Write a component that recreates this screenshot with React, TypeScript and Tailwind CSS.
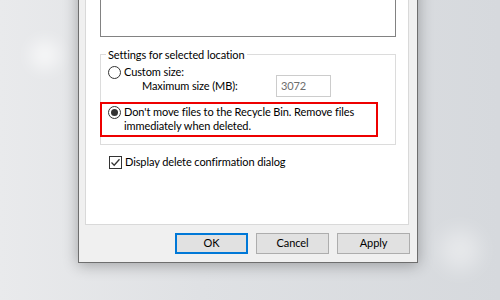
const font = { fontFamily: 'Lato, "Noto Sans", sans-serif' };

const Radio = ({ checked }: { checked?: boolean }) => (
    <span className="flex h-[13px] w-[13px] shrink-0 items-center justify-center rounded-full border border-[#333333] bg-white">
        {checked && <span className="h-[7px] w-[7px] rounded-full bg-[#333333]" />}
    </span>
);

const Checkbox = () => (
    <span className="flex h-[13px] w-[13px] shrink-0 items-center justify-center border border-[#333333] bg-white">
        <svg width="11" height="11" viewBox="0 0 11 11" fill="none">
            <path d="M1.5 5.5 L4.2 8.2 L9.5 2.2" stroke="#333333" strokeWidth="1.3" />
        </svg>
    </span>
);

const DialogButton = ({ label, primary }: { label: string; primary?: boolean }) => (
    <button
        className={
            primary
                ? "flex h-[21px] w-[73px] items-center justify-center border-2 border-[#0078d7] bg-[#e1e1e1] text-[11px] text-black"
                : "flex h-[21px] w-[73px] items-center justify-center border border-[#adadad] bg-[#e1e1e1] text-[11px] text-black"
        }
    >
        {label}
    </button>
);

export default function App() {
    return (
        <div
            className="relative h-[300px] w-[500px] overflow-hidden bg-[linear-gradient(90deg,#e9eaec_0%,#dfe1e4_40%,#d6d9dd_100%)] tracking-[-0.1px]"
            style={font}
        >
            <div className="absolute left-[30px] top-[40px] h-[30px] w-[30px] rounded-full bg-white/60 blur-[8px]" />
            <div className="absolute left-[440px] top-[230px] h-[40px] w-[40px] rounded-full bg-white/40 blur-[10px]" />
            <div className="absolute left-[78px] bottom-[37px] flex w-[340px] flex-col border border-[#6e6e6e] bg-[#f0f0f0] shadow-[0_2px_14px_rgba(0,0,0,0.3)]">
                <div className="ml-[6px] mr-[8px] mt-[6px] flex flex-col border border-[#d9d9d9] bg-white pb-[54px] pl-[14px] text-[11px] leading-[14px] text-black">
                    <div className="mt-[10px] h-[100px] w-[296px] border border-[#828282] bg-white" />

                    <div className="relative mt-[17px] flex w-[296px] flex-col border border-[#dcdcdc] pb-[7px] pt-[10px]">
                        <span className="absolute left-[5px] top-[-8px] bg-white px-[2px] leading-[16px]">
                            Settings for selected location
                        </span>
                        <div className="flex h-[14px] items-center gap-[3px] pl-[7px]">
                            <Radio />
                            <span>Custom size:</span>
                        </div>
                        <div className="flex h-[14px] items-center">
                            <span className="ml-[41px] w-[134px] whitespace-nowrap">Maximum size (MB):</span>
                            <span className="flex h-[22px] w-[55px] shrink-0 items-center border border-[#cccccc] bg-white pl-[4px] text-[#6d6d6d]">
                                3072
                            </span>
                        </div>
                        <div className="-ml-[1px] mt-[9px] flex h-[35px] w-[278px] items-start gap-[3px] border-2 border-[#ee0000] pl-[6px] pt-[1px]">
                            <span className="mt-[1px]">
                                <Radio checked />
                            </span>
                            <span className="whitespace-nowrap">
                                Don't move files to the Recycle Bin. Remove files
                                <br />
                                immediately when deleted.
                            </span>
                        </div>
                    </div>

                    <div className="ml-[9px] mt-[9px] flex h-[16px] items-center gap-[3px]">
                        <Checkbox />
                        <span>Display delete confirmation dialog</span>
                    </div>
                </div>

                <div className="mb-[8px] mr-[7px] mt-[8px] flex justify-end gap-[8px]">
                    <DialogButton label="OK" primary />
                    <DialogButton label="Cancel" />
                    <DialogButton label="Apply" />
                </div>
            </div>
        </div>
    );
}
